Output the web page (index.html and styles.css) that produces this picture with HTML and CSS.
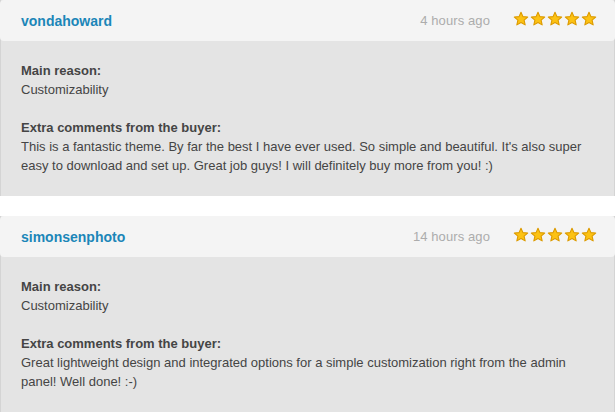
FILE: index.html
```html
<!DOCTYPE html>
<html>
<head>
<meta charset="utf-8">
<link rel="stylesheet" href="styles.css">
</head>
<body>
<svg width="0" height="0" class="defs">
  <defs>
    <symbol id="star" viewBox="0 0 16 16">
      <path d="M8 1.2 L9.95 5.6 L14.7 6.05 L11.1 9.2 L12.15 13.9 L8 11.45 L3.85 13.9 L4.9 9.2 L1.3 6.05 L6.05 5.6 Z" fill="#fcc213" stroke="#dc9a00" stroke-width="1.1" stroke-linejoin="round"/>
    </symbol>
  </defs>
</svg>
<div class="review">
  <div class="review-head">
    <a class="author">vondahoward</a>
    <div class="meta">
      <span class="time">4 hours ago</span>
      <span class="stars">
        <svg class="star"><use href="#star"/></svg><svg class="star"><use href="#star"/></svg><svg class="star"><use href="#star"/></svg><svg class="star"><use href="#star"/></svg><svg class="star"><use href="#star"/></svg>
      </span>
    </div>
  </div>
  <div class="review-body">
    <p class="label">Main reason:</p>
    <p>Customizability</p>
    <p class="label gap">Extra comments from the buyer:</p>
    <p>This is a fantastic theme. By far the best I have ever used. So simple and beautiful. It's also super easy to download and set up. Great job guys! I will definitely buy more from you! :)</p>
  </div>
</div>
<div class="review">
  <div class="review-head">
    <a class="author">simonsenphoto</a>
    <div class="meta">
      <span class="time">14 hours ago</span>
      <span class="stars">
        <svg class="star"><use href="#star"/></svg><svg class="star"><use href="#star"/></svg><svg class="star"><use href="#star"/></svg><svg class="star"><use href="#star"/></svg><svg class="star"><use href="#star"/></svg>
      </span>
    </div>
  </div>
  <div class="review-body">
    <p class="label">Main reason:</p>
    <p>Customizability</p>
    <p class="label gap">Extra comments from the buyer:</p>
    <p>Great lightweight design and integrated options for a simple customization right from the admin panel! Well done! :-)</p>
  </div>
</div>
</body>
</html>
```
FILE: styles.css
```css
html, body {
  margin: 0;
  padding: 0;
  background: #ffffff;
}
body {
  font-family: "Liberation Sans", Arial, sans-serif;
  font-size: 13px;
  color: #454545;
  width: 615px;
}
.defs {
  position: absolute;
  width: 0;
  height: 0;
}
.review {
  background: #e4e4e4;
  border-left: 1px solid #d4d4d4;
  border-right: 1px solid #d4d4d4;
  margin-bottom: 20px;
}
.review-head {
  background: #f4f4f4;
  height: 41px;
  margin: 0 -1px;
  border-radius: 4px;
  display: flex;
  align-items: center;
  justify-content: space-between;
  padding: 0 18px 0 21px;
  box-sizing: border-box;
}
.author {
  color: #1b86b8;
  font-weight: bold;
  font-size: 14px;
  text-decoration: none;
}
.meta {
  display: flex;
  align-items: center;
  gap: 23px;
}
.time {
  color: #acacac;
  font-size: 13px;
  letter-spacing: 0.1px;
}
.stars {
  display: flex;
  gap: 1px;
  margin-top: -4px;
}
.star {
  width: 16px;
  height: 16px;
  display: block;
}
.review-body {
  padding: 20px 20px 21px 20px;
  line-height: 19px;
}
.review-body p {
  margin: 0;
}
.label {
  font-weight: bold;
}
.label.gap {
  margin-top: 19px;
}
```
